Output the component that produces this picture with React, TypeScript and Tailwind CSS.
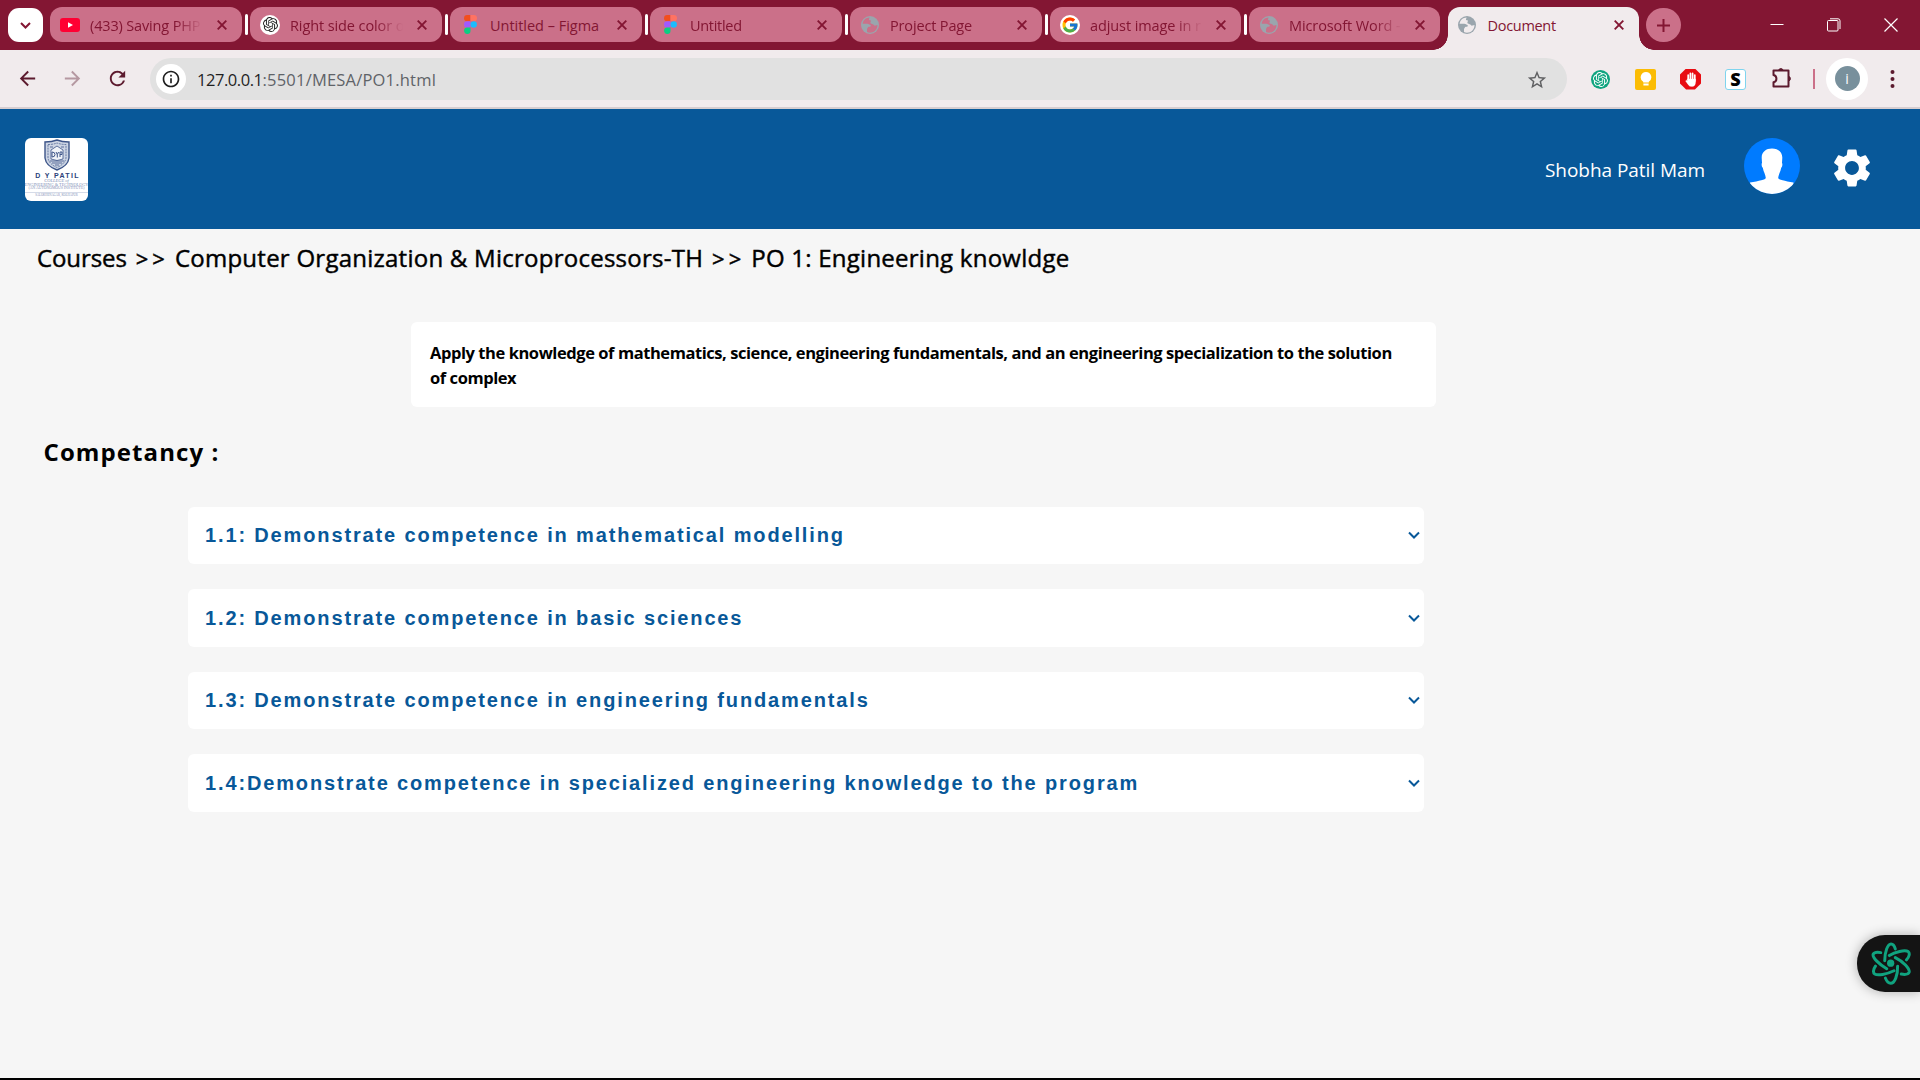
import type { ReactNode } from 'react';
import { MdArrowBack, MdArrowForward, MdRefresh, MdInfoOutline, MdStarOutline, MdSettings } from 'react-icons/md';
import { SiOpenai } from 'react-icons/si';
import { FcGoogle } from 'react-icons/fc';

function YouTube() {
  return (
    <svg width="20" height="14" viewBox="0 0 20 14">
      <rect width="20" height="14" rx="3" fill="#ff0033" />
      <path d="M8 4.2 L13 7 L8 9.8Z" fill="#fff" />
    </svg>
  );
}

function Figma() {
  return (
    <svg width="13" height="19" viewBox="0 0 13 19">
      <path d="M3.2 0H6.5V6.3H3.2A3.15 3.15 0 0 1 3.2 0Z" fill="#f24e1e" />
      <path d="M6.5 0H9.8A3.15 3.15 0 0 1 9.8 6.3H6.5Z" fill="#ff7262" />
      <path d="M3.2 6.3H6.5V12.6H3.2A3.15 3.15 0 0 1 3.2 6.3Z" fill="#a259ff" />
      <circle cx="9.7" cy="9.45" r="3.2" fill="#1abcfe" />
      <path d="M3.2 12.6H6.5V15.8A3.2 3.2 0 1 1 3.2 12.6Z" fill="#0acf83" />
    </svg>
  );
}

function Globe({ land }: { land: string }) {
  return (
    <svg width="18" height="18" viewBox="0 0 18 18">
      <circle cx="9" cy="9" r="9" fill="#9aa5ad" />
      <path
        d="M8.6 1.5C5 1.6 2 4.2 1.6 7.8L6.3 7.8C7.8 7.9 8.3 8.8 9.6 8.9C10.2 10.4 9.3 10.8 7.9 10.8C6.6 10.9 6.7 12.4 6 13L6 16C8.5 17.2 12.2 16.7 14.4 14.4C15.8 13 16.5 11.2 16.5 9L13.6 9.8C12.6 8 10.8 8.2 9.5 7.3C9 6.2 10.3 5.4 9.8 4.6C9.2 4 8.1 4.2 7.9 3.4Z"
        fill={land}
      />
    </svg>
  );
}

function Cross({ size }: { size: number }) {
  return (
    <svg width={size} height={size} viewBox="0 0 10 10" stroke="currentColor" strokeWidth="1.9">
      <path d="M0.7 0.7L9.3 9.3M9.3 0.7L0.7 9.3" />
    </svg>
  );
}

const whiteDisc = 'flex size-5 items-center justify-center rounded-full bg-white';

const tabs: { title: string; icon: ReactNode; width: string; spacing: string }[] = [
  { title: '(433) Saving PHP', icon: <YouTube />, width: 'w-[200px]', spacing: 'tracking-[-0.15px]' },
  { title: 'Right side color o', icon: <span className={whiteDisc}><SiOpenai size={15} color="#222" /></span>, width: 'w-[200px]', spacing: 'tracking-[-0.1px]' },
  { title: 'Untitled – Figma', icon: <Figma />, width: 'w-[200px]', spacing: 'tracking-[-0.02px]' },
  { title: 'Untitled', icon: <Figma />, width: 'w-[200px]', spacing: 'tracking-[-0.3px]' },
  { title: 'Project Page', icon: <Globe land="#cb7089" />, width: 'w-[200px]', spacing: 'tracking-[-0.15px]' },
  { title: 'adjust image in r', icon: <span className={whiteDisc}><FcGoogle size={18} /></span>, width: 'w-[199px]', spacing: 'tracking-[-0.1px]' },
  { title: 'Microsoft Word -', icon: <Globe land="#cb7089" />, width: 'w-[191px]', spacing: 'tracking-[-0.1px]' },
];

function TabStrip() {
  return (
    <div className="flex h-[50px] bg-[#831633] pt-[7px] text-[14.5px] text-[#831633]">
      <div className="mt-px ml-2 flex h-[34px] w-[35px] items-center justify-center rounded-[11px] bg-white">
        <svg width="11" height="7" viewBox="0 0 11 7" fill="none" stroke="#831633" strokeWidth="2">
          <path d="M1 1L5.5 5.5L10 1" />
        </svg>
      </div>
      <div className="ml-[7px] flex">
        {tabs.map((t, i) => (
          <div key={t.title} className={`flex ${t.width}`}>
            <div className="flex h-[35px] min-w-0 flex-1 items-center rounded-xl bg-[#cb7089] pl-2.5">
              <div className="flex w-5 shrink-0 justify-center">{t.icon}</div>
              <div
                className={`mt-[2px] ml-2.5 w-[116px] overflow-hidden whitespace-nowrap ${i === 2 ? '' : '[mask-image:linear-gradient(to_right,black_85px,transparent_113px)]'} ${t.spacing}`}
              >
                {t.title}
              </div>
              <div className={i > 4 ? 'ml-[10px] shrink-0' : 'ml-[11px] shrink-0'}>
                <Cross size={10} />
              </div>
            </div>
            {i < 6 && <div className="mt-[7px] mr-[2px] ml-[3px] h-[21px] w-[3px] rounded-full bg-white" />}
          </div>
        ))}
      </div>
      <div className="-ml-[7px] flex items-end">
        <div className="size-[15px] bg-[radial-gradient(circle_at_0_0,transparent_14.5px,#f1ebed_15px)]" />
        <div className="flex h-[43px] w-[191px] items-center rounded-t-xl bg-[#f1ebed] pb-2 pl-2.5">
          <div className="flex w-[18px] justify-center">
            <Globe land="#f1ebed" />
          </div>
          <div className="mt-[2px] ml-[11.5px] flex-1 tracking-[-0.3px]">Document</div>
          <div className="mr-[15px]">
            <Cross size={10} />
          </div>
        </div>
        <div className="size-[15px] bg-[radial-gradient(circle_at_100%_0,transparent_14.5px,#f1ebed_15px)]" />
      </div>
      <div className="mt-px -ml-2 flex h-[34px] w-[35px] items-center justify-center rounded-full bg-[#cb7089]">
        <svg width="13" height="13" viewBox="0 0 13 13" stroke="#831633" strokeWidth="2">
          <path d="M0 6.5H13M6.5 0V13" />
        </svg>
      </div>
      <div className="ml-auto flex h-[35px] items-center gap-[43px] pr-[22px] text-white">
        <svg width="14" height="14" viewBox="0 0 14 14" stroke="currentColor">
          <path d="M0.5 6.5H13.5" />
        </svg>
        <svg width="14" height="14" viewBox="0 0 14 14" fill="none" stroke="currentColor">
          <rect x="0.5" y="2.5" width="10.5" height="10.5" rx="1" />
          <path d="M3 0.8H11A2 2 0 0 1 13 2.8V11" />
        </svg>
        <svg width="14" height="14" viewBox="0 0 14 14" stroke="currentColor" strokeWidth="1.2">
          <path d="M0.5 0.5L13.5 13.5M13.5 0.5L0.5 13.5" />
        </svg>
      </div>
    </div>
  );
}

function Toolbar() {
  return (
    <div className="flex h-[59px] items-center border-b-2 border-[#d6cdd0] bg-[#f1ebed] text-[#5c1a2e]">
      <div className="flex w-[150px] shrink-0 items-center">
        <MdArrowBack size={23} className="ml-4" />
        <MdArrowForward size={23} className="ml-[22px] text-[#b598a1]" />
        <MdRefresh size={23} className="ml-[21.5px]" />
      </div>
      <div className="mt-px flex h-[42px] w-[1417px] shrink-0 items-center rounded-full bg-[#e1e1e1] pr-[19px] pl-1.5">
        <div className="flex size-[30px] items-center justify-center rounded-full bg-white text-[#1f1f1f]">
          <MdInfoOutline size={20} />
        </div>
        <div className="mt-[2px] ml-[11px] flex-1 text-[16.5px] text-[#5f6368]">
          <span className="tracking-[-0.45px] text-[#1f1f1f]">127.0.0.1</span>
          <span className="tracking-[0.2px]">:5501/MESA/PO1.html</span>
        </div>
        <MdStarOutline size={22} className="mt-px text-[#5f6062]" />
      </div>
      <div className="ml-6 flex items-center">
        <div className="mt-px flex size-[19px] items-center justify-center rounded-full bg-[#0fa47f]">
          <SiOpenai size={15} color="#fff" />
        </div>
        <div className="mt-px ml-[25px] flex size-[21px] items-center justify-center rounded-[2px] bg-[#fbbc04]">
          <svg width="12" height="14" viewBox="0 0 12 14" fill="#fff">
            <path d="M6 0A5.3 5.3 0 0 1 8.8 9.8V10.4H3.2V9.8A5.3 5.3 0 0 1 6 0ZM3.4 11.4H8.6V13.4H3.4Z" />
          </svg>
        </div>
        <div className="mt-px ml-6 flex size-[21px] items-center justify-center bg-[#e80c12] [clip-path:polygon(29%_0,71%_0,100%_29%,100%_71%,71%_100%,29%_100%,0_71%,0_29%)]">
          <svg width="12" height="15" viewBox="0 0 12 15" stroke="#fff" strokeLinecap="round" fill="none">
            <path d="M3.2 3V8M5.4 1.4V8M7.6 1.4V8M9.8 3V9" strokeWidth="1.7" />
            <path d="M2.4 7H10.6V10Q10.4 14.6 7 14.6Q4.4 14.6 3 12.4L0.6 9Q1 7.6 2.4 9Z" fill="#fff" strokeWidth="0.3" />
          </svg>
        </div>
        <div className="mt-px ml-6 flex size-[21px] items-center justify-center rounded-[3px] border border-[#7fd4ee] bg-white font-['Open_Sans',sans-serif] text-[18px] leading-none font-extrabold text-black">
          S
        </div>
        <svg className="mb-0.5 ml-[25px]" width="22" height="22" viewBox="0 0 22 22" fill="none" stroke="currentColor" strokeWidth="2">
          <path d="M2.5 3.5H17.5V19.5H2.5V15.3C6.4 14.5 6.4 8.8 2.5 8Z" strokeLinejoin="round" />
          <path d="M7.5 3.5A2.4 2.4 0 0 1 12.2 3.5ZM17.5 9.3A2.4 2.4 0 0 1 17.5 14Z" fill="currentColor" strokeWidth="1" />
        </svg>
        <div className="ml-[19.5px] h-5 w-[2.5px] bg-[#cb7089]" />
        <div className="ml-[11px] flex size-[42px] items-center justify-center rounded-full bg-white">
          <div className="flex size-[25px] items-center justify-center rounded-full bg-[#78909c] text-[14px] text-white">i</div>
        </div>
        <svg className="ml-[21.5px]" width="5" height="18" viewBox="0 0 5 18" fill="currentColor">
          <circle cx="2.5" cy="2" r="2" />
          <circle cx="2.5" cy="9" r="2" />
          <circle cx="2.5" cy="16" r="2" />
        </svg>
      </div>
    </div>
  );
}

function CollegeLogo() {
  return (
    <div className="flex size-[63px] flex-col items-center overflow-hidden rounded-md bg-white pt-px text-center font-['Liberation_Serif',serif] leading-none whitespace-nowrap text-[#7d8db5]">
      <svg width="26" height="32" viewBox="0 0 26 32" fill="none" stroke="#3c5488" className="shrink-0">
        <path d="M1 3Q8 3 13 1Q18 3 25 3V19Q24 27 13 31Q2 27 1 19Z" fill="#cdd5e4" strokeWidth="1.4" />
        <path d="M4 5.5Q9 5.5 13 4Q17 5.5 22 5.5V19Q21 25 13 28.5Q5 25 4 19Z" strokeWidth="0.7" strokeDasharray="2 0.8" />
        <path d="M7 11L13 7L19 11V20Q13 23 7 20Z" fill="#f0f3f8" strokeWidth="0.8" />
        <path d="M8 13V18M8 13Q11 13 11 15.5Q11 18 8 18M12 13L13.3 15.5L14.6 13M13.3 15.5V18.5M16 18V13H18V15.5H16" strokeWidth="1" />
        <path d="M6 22L20 22M8 24L18 24M11 26L15 26M6 8L9 8M17 8L20 8" strokeWidth="0.8" />
      </svg>
      <div className="mt-[1px] pl-[2px] font-['Liberation_Sans',sans-serif] text-[7px] font-bold tracking-[1.35px] text-[#2b4279]">D Y PATIL</div>
      <div className="text-[4.5px] italic">COLLEGE of</div>
      <div className="text-[4.3px]">ENGINEERING &amp; TECHNOLOGY</div>
      <div className="w-full border-b border-[#d5dbe8] pb-[0.5px] text-[3.8px]">(AN AUTONOMOUS INSTITUTE)</div>
      <div className="mt-px text-[3px]">SALOKHENAGAR, KOLHAPUR</div>
    </div>
  );
}

function Header() {
  return (
    <header className="flex h-[120px] items-center bg-[#085899] pr-[45px] pl-[25px]">
      <CollegeLogo />
      <div className="mt-[3px] ml-auto text-[19px] tracking-[-0.05px] text-white">Shobha Patil Mam</div>
      <svg className="mb-[6px] ml-[39px]" width="56" height="56" viewBox="0 0 56 56">
        <defs>
          <clipPath id="avatar">
            <circle cx="28" cy="28" r="28" />
          </clipPath>
        </defs>
        <circle cx="28" cy="28" r="28" fill="#007bff" />
        <path
          clipPath="url(#avatar)"
          d="M28 10.5C34 10.5 38.5 14 38.3 20L38 25C38.8 26 38.2 29 37.2 29.8C36.5 34 34.5 36.5 34.2 40C34.2 41.5 41 43 49.5 44.5V58H6V44.5C15 43 21.8 41.5 21.8 40C21.5 36.5 19.5 34 18.8 29.8C17.8 29 17.2 26 18 25L17.7 20C17.5 14 22 10.5 28 10.5Z"
          fill="#fff"
        />
      </svg>
      <MdSettings size={46} color="#fff" className="mb-[3px] ml-[29px]" />
    </header>
  );
}

const competencies = [
  '1.1: Demonstrate competence in mathematical modelling',
  '1.2: Demonstrate competence in basic sciences',
  '1.3: Demonstrate competence in engineering fundamentals',
  '1.4:Demonstrate competence in specialized engineering knowledge to the program',
];

function AssistantButton() {
  return (
    <div className="absolute top-[935px] right-0 flex h-[57px] w-[63px] items-center rounded-l-[28px] bg-[#141414] pl-[14px] shadow-[0_0_12px_rgba(0,0,0,0.3)]">
      <svg width="40" height="43" viewBox="93 65 120 130" fill="none" stroke="#10a37f" strokeWidth="9" strokeLinecap="round">
        <circle cx="152" cy="129" r="11" fill="#10a37f" stroke="none" />
        <path d="M134 122C134 95 143 71 153 71C160 71 164 78 166 86M136 174C140 184 146 190 152 190C164 190 174 165 173 138" />
        <path d="M148 106C165 95 195 88 205 94C211 99 208 110 200 119M106 138C99 148 98 158 104 162C112 167 140 163 162 152" />
        <path d="M122 97C112 95 102 97 99 102C96 112 118 133 140 146M166 112C190 124 210 145 208 156C206 162 196 164 184 162" />
      </svg>
    </div>
  );
}

export default function App() {
  return (
    <div className="relative flex h-[1080px] w-[1920px] flex-col overflow-hidden border-b-2 border-black bg-[#f6f6f6] font-['Open_Sans','Noto_Sans',sans-serif]">
      <TabStrip />
      <Toolbar />
      <Header />
      <main className="flex-1 text-black">
        <nav className="flex h-[58px] items-center pl-[37px] text-[24px] whitespace-nowrap [-webkit-text-stroke:0.45px_black]">
          <span className="tracking-[-0.1px]">Courses</span>
          <span className="ml-[9px] text-[22px] tracking-[4px]">&gt;&gt;</span>
          <span className="ml-[6px] tracking-[0.25px]">Computer Organization &amp; Microprocessors-TH</span>
          <span className="ml-[9px] text-[22px] tracking-[4px]">&gt;&gt;</span>
          <span className="ml-[6px] tracking-[0.24px]">PO 1: Engineering knowldge</span>
        </nav>
        <p className="mt-[35px] ml-[411px] h-[85px] w-[1025px] rounded-md bg-white px-[19px] pt-[18px] text-[16.5px] leading-[25px] font-bold tracking-[-0.435px]">
          Apply the knowledge of mathematics, science, engineering fundamentals, and an engineering specialization to the solution
          <br />
          of complex
        </p>
        <h2 className="mt-[28px] ml-[43.5px] text-[24px] leading-[34px] font-bold tracking-[1.1px]">Competancy :</h2>
        <div className="mt-[37.5px] ml-[188px] flex w-[1236px] flex-col gap-[25px]">
          {competencies.map((c) => (
            <div key={c} className="flex h-[57.5px] items-center justify-between rounded-md bg-white pr-1 pl-[17px]">
              <span className="font-['Liberation_Sans',sans-serif] text-[20px] font-bold tracking-[1.86px] text-[#085899]">{c}</span>
              <svg width="12" height="8" viewBox="0 0 12 8" fill="none" stroke="#085899" strokeWidth="2">
                <path d="M1 1.5L6 6.5L11 1.5" />
              </svg>
            </div>
          ))}
        </div>
      </main>
      <AssistantButton />
    </div>
  );
}
